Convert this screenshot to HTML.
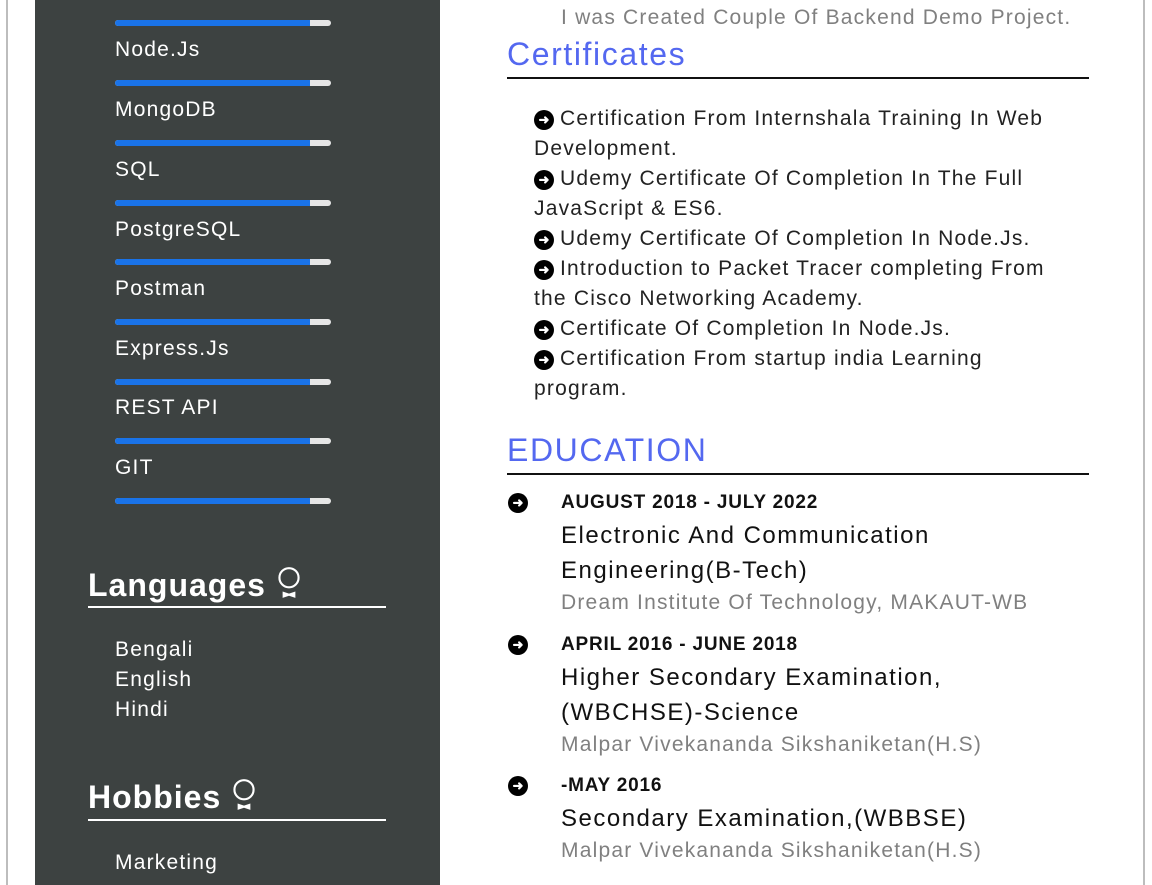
<!DOCTYPE html>
<html style="height:885px;overflow:hidden"><head><style>
*{margin:0;padding:0;box-sizing:border-box}
body{width:1152px;height:885px;overflow:hidden;background:#fff;font-family:"Liberation Sans",sans-serif;position:relative}
.frame{position:absolute;left:6px;top:-2px;width:1139px;height:887px;border:2px solid #bdbdbd;border-top:none;border-bottom:none;background:#fff}
.side{position:absolute;left:35px;top:0;width:405px;height:885px;background:#3d4241;color:#fff}
.abs{position:absolute;white-space:nowrap}
.bar{position:absolute;left:115px;width:216px;height:6px;border-radius:3px;background:#e6e6e6;overflow:hidden}
.bar i{display:block;width:195px;height:100%;background:#1a73e8}
.sk{position:absolute;left:115px;font-size:21px;letter-spacing:1.2px;color:#fff}
.h{position:absolute;left:88px;font-size:32px;letter-spacing:1px;font-weight:bold;color:#fff;white-space:nowrap}
.hl{position:absolute;left:88px;width:298px;height:2px;background:#fff}
.li{position:absolute;left:115px;font-size:21px;letter-spacing:1.2px;color:#fff}
.rh{position:absolute;left:507px;font-size:32px;letter-spacing:1.6px;color:#5468f0}
.rl{position:absolute;left:507px;width:582px;height:2px;background:#111}
.cert{position:absolute;left:534px;width:540px;font-size:21px;letter-spacing:1.2px;line-height:30px;color:#222}
.dot{display:inline-block;width:20px;height:20px;border-radius:50%;background:#000;color:#fff;font-size:13px;line-height:20px;text-align:center;vertical-align:1px;margin-right:6px;font-weight:bold;letter-spacing:0}
.ed{position:absolute;left:561px;color:#111;white-space:nowrap}
.date{font-size:19px;letter-spacing:0.8px;font-weight:bold;line-height:22px}
.tit{font-size:24px;letter-spacing:1.5px;line-height:35px;margin-top:4px}
.ins{font-size:21px;letter-spacing:1.2px;color:#808080;line-height:22px;margin-top:4px}
.edot{position:absolute;left:508px;width:20px;height:20px;border-radius:50%;background:#000;color:#fff;font-size:13px;line-height:20px;text-align:center;font-weight:bold}
</style></head><body>
<div class="frame"></div>
<div class="side"></div>
<div class="bar" style="top:20px"><i></i></div>
<div class="sk" style="top:38px">Node.Js</div>
<div class="bar" style="top:80px"><i></i></div>
<div class="sk" style="top:98px">MongoDB</div>
<div class="bar" style="top:140px"><i></i></div>
<div class="sk" style="top:158px">SQL</div>
<div class="bar" style="top:200px"><i></i></div>
<div class="sk" style="top:218px">PostgreSQL</div>
<div class="bar" style="top:259px"><i></i></div>
<div class="sk" style="top:277px">Postman</div>
<div class="bar" style="top:319px"><i></i></div>
<div class="sk" style="top:337px">Express.Js</div>
<div class="bar" style="top:379px"><i></i></div>
<div class="sk" style="top:396px">REST API</div>
<div class="bar" style="top:438px"><i></i></div>
<div class="sk" style="top:456px">GIT</div>
<div class="bar" style="top:498px"><i></i></div>

<div class="h" style="top:566px">Languages <svg width="26" height="34" viewBox="0 0 24 32" style="vertical-align:-4px"><circle cx="12" cy="11" r="9" fill="none" stroke="#fff" stroke-width="2"/><path d="M6 24 L12 26 L18 24 L18 30 L12 28 L6 30Z" fill="#fff"/></svg></div>
<div class="hl" style="top:606px"></div>
<div class="li" style="top:638px">Bengali</div>
<div class="li" style="top:668px">English</div>
<div class="li" style="top:698px">Hindi</div>
<div class="h" style="top:778px">Hobbies <svg width="26" height="34" viewBox="0 0 24 32" style="vertical-align:-4px"><circle cx="12" cy="11" r="9" fill="none" stroke="#fff" stroke-width="2"/><path d="M6 24 L12 26 L18 24 L18 30 L12 28 L6 30Z" fill="#fff"/></svg></div>
<div class="hl" style="top:819px"></div>
<div class="li" style="top:851px">Marketing</div>

<div class="abs" style="left:561px;top:6px;font-size:21px;letter-spacing:1.2px;color:#808080">I was Created Couple Of Backend Demo Project.</div>
<div class="rh" style="top:36px">Certificates</div>
<div class="rl" style="top:77px"></div>
<div class="cert" style="top:104px">
<div><span class="dot">➜</span>Certification From Internshala Training In Web Development.</div>
<div><span class="dot">➜</span>Udemy Certificate Of Completion In The Full JavaScript &amp; ES6.</div>
<div><span class="dot">➜</span>Udemy Certificate Of Completion In Node.Js.</div>
<div><span class="dot">➜</span>Introduction to Packet Tracer completing From the Cisco Networking Academy.</div>
<div><span class="dot">➜</span>Certificate Of Completion In Node.Js.</div>
<div><span class="dot">➜</span>Certification From startup india Learning program.</div>
</div>
<div class="rh" style="top:432px">EDUCATION</div>
<div class="rl" style="top:473px"></div>

<div class="edot" style="top:493px">➜</div>
<div class="ed" style="top:492px"><div class="date">AUGUST 2018 - JULY 2022</div><div class="tit">Electronic And Communication<br>Engineering(B-Tech)</div><div class="ins">Dream Institute Of Technology, MAKAUT-WB</div></div>
<div class="edot" style="top:635px">➜</div>
<div class="ed" style="top:634px"><div class="date">APRIL 2016 - JUNE 2018</div><div class="tit">Higher Secondary Examination,<br>(WBCHSE)-Science</div><div class="ins">Malpar Vivekananda Sikshaniketan(H.S)</div></div>
<div class="edot" style="top:776px">➜</div>
<div class="ed" style="top:775px"><div class="date">-MAY 2016</div><div class="tit">Secondary Examination,(WBBSE)</div><div class="ins">Malpar Vivekananda Sikshaniketan(H.S)</div></div>
</body></html>
